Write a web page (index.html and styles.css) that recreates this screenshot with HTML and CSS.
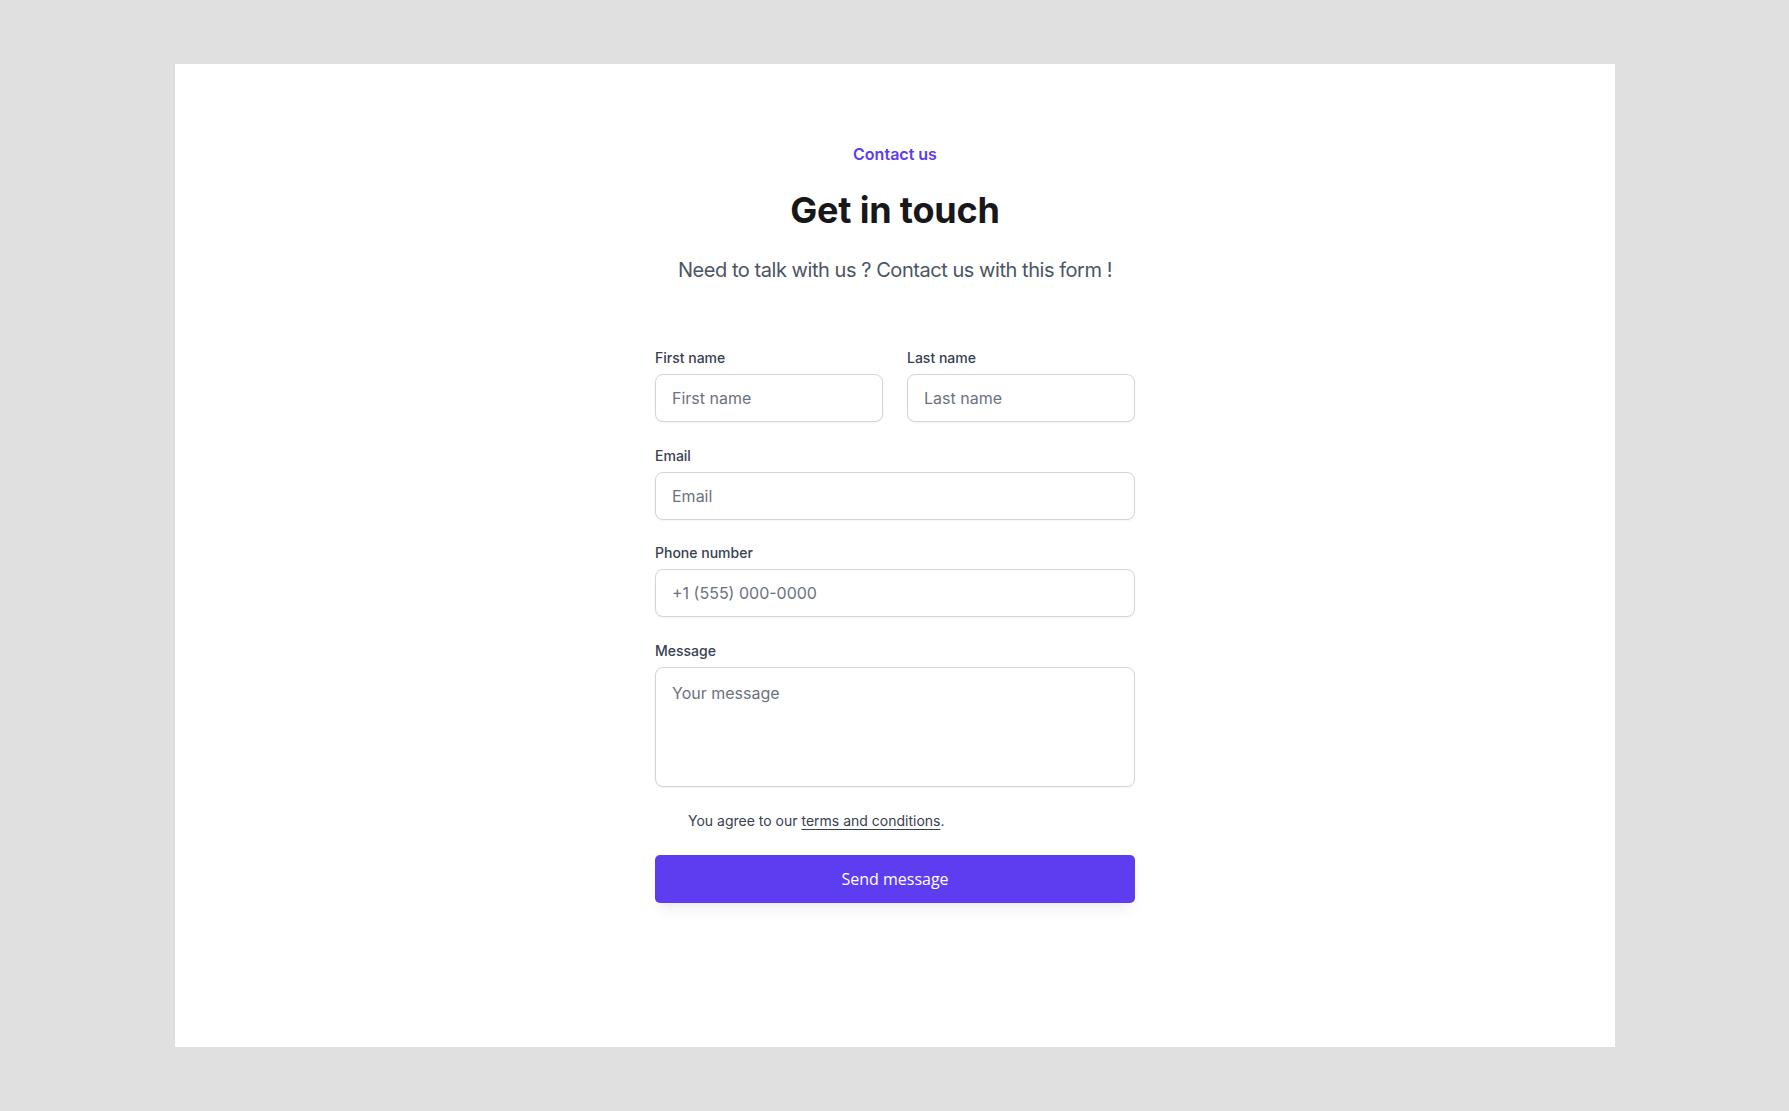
FILE: index.html
```html
<!DOCTYPE html>
<html lang="en">
<head>
<meta charset="utf-8">
<title>Contact us</title>
<link rel="stylesheet" href="styles.css">
</head>
<body>
  <main class="card">
    <header class="intro">
      <p class="eyebrow">Contact us</p>
      <h1 class="title">Get in touch</h1>
      <p class="lead">Need to talk with us ? Contact us with this form !</p>
    </header>

    <form class="form" action="#">
      <div class="row-2">
        <div class="field">
          <label class="label" for="first">First name</label>
          <input class="input" id="first" type="text" placeholder="First name">
        </div>
        <div class="field">
          <label class="label" for="last">Last name</label>
          <input class="input" id="last" type="text" placeholder="Last name">
        </div>
      </div>
      <div class="field">
        <label class="label" for="email">Email</label>
        <input class="input" id="email" type="email" placeholder="Email">
      </div>
      <div class="field">
        <label class="label" for="phone">Phone number</label>
        <input class="input" id="phone" type="tel" placeholder="+1 (555) 000-0000">
      </div>
      <div class="field">
        <label class="label" for="message">Message</label>
        <textarea class="input textarea" id="message" placeholder="Your message"></textarea>
      </div>
      <p class="agree">You agree to our <a href="#" class="link">terms and conditions</a>.</p>
      <button class="submit" type="submit">Send message</button>
    </form>
  </main>
</body>
</html>
```

FILE: styles.css
```css
* {
  box-sizing: border-box;
}

html,
body {
  margin: 0;
  padding: 0;
}

body {
  background: #e0e0e0;
  font-family: Inter, "Liberation Sans", sans-serif;
  padding: 64px 174px 64px 175px;
}

.card {
  background: #ffffff;
  width: 1440px;
  height: 983px;
  padding-top: 78px;
  display: flex;
  flex-direction: column;
  align-items: center;
}

.intro {
  text-align: center;
}

.eyebrow {
  margin: 0;
  font-size: 16px;
  line-height: 24px;
  font-weight: 600;
  color: #5b3cf0;
}

.title {
  margin: 24px 0 0;
  font-size: 36px;
  line-height: 40px;
  font-weight: 700;
  color: #18181b;
  letter-spacing: -0.2px;
}

.lead {
  margin: 26px 0 0;
  font-size: 20px;
  line-height: 28px;
  color: #4b5563;
  letter-spacing: -0.45px;
}

.form {
  width: 480px;
  margin-top: 64px;
  display: flex;
  flex-direction: column;
  gap: 23.5px;
}

.row-2 {
  display: grid;
  grid-template-columns: 1fr 1fr;
  gap: 24px;
}

.field {
  display: flex;
  flex-direction: column;
}

.label {
  font-size: 14px;
  line-height: 20px;
  font-weight: 500;
  color: #374151;
  margin-bottom: 6px;
}

.input {
  display: block;
  width: 100%;
  height: 48px;
  padding: 0 16px;
  border: 1px solid #d1d5db;
  border-radius: 8px;
  background: #ffffff;
  font-family: Inter, "Liberation Sans", sans-serif;
  font-size: 16px;
  color: #111827;
  box-shadow: 0 1px 2px rgba(16, 24, 40, 0.05);
  outline: none;
}

.input::placeholder {
  color: #6b7280;
  opacity: 1;
}

.textarea {
  height: 120px;
  padding: 13px 16px;
  line-height: 24px;
  resize: none;
}

.agree {
  margin: 1px 0 0;
  padding-left: 33px;
  font-size: 14px;
  line-height: 20px;
  color: #374151;
}

.link {
  color: #374151;
  text-decoration: underline;
  text-underline-offset: 3px;
  text-decoration-thickness: 1px;
}

.submit {
  margin-top: 0;
  height: 48px;
  width: 100%;
  border: 0;
  border-radius: 5px;
  background: #5e3df0;
  color: #ffffff;
  font-family: "Open Sans", "Noto Sans", sans-serif;
  font-size: 16px;
  font-weight: 500;
  cursor: pointer;
  box-shadow: 0 10px 15px -3px rgba(0, 0, 0, 0.06), 0 4px 6px -4px rgba(0, 0, 0, 0.05);
}
```
